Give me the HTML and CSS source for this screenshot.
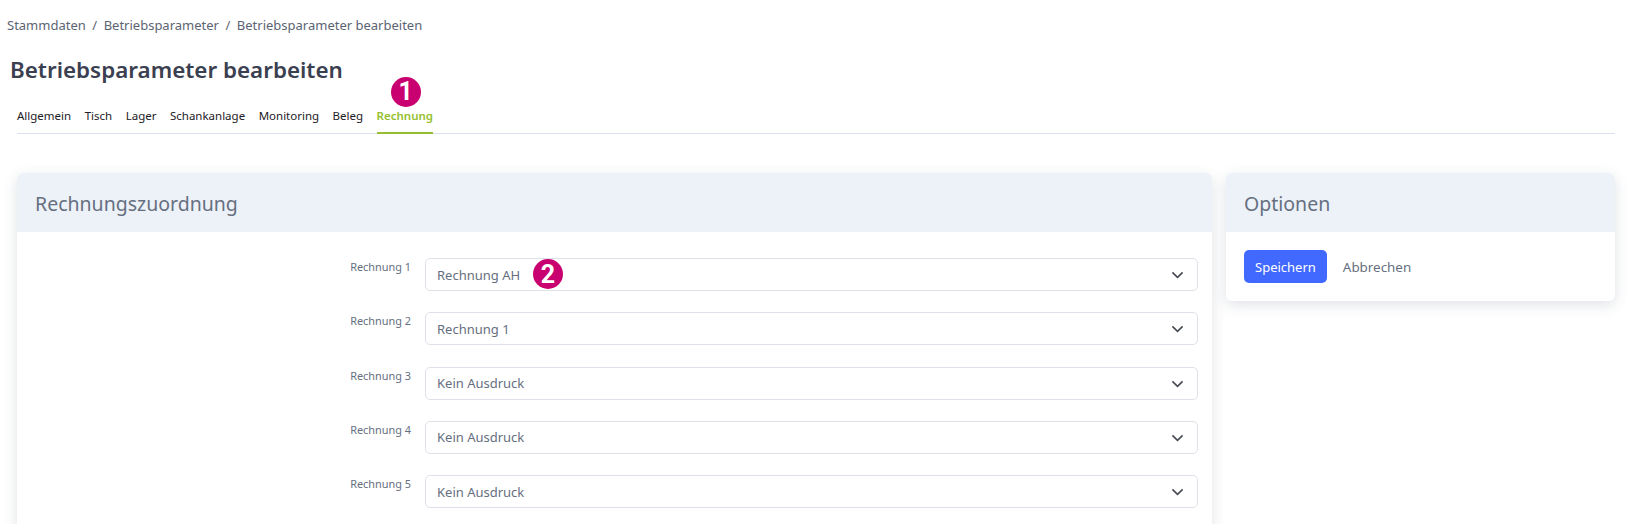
FILE: index.html

```html
<!DOCTYPE html>
<html lang="de">
<head>
  <meta charset="UTF-8">
  <title>Betriebsparameter bearbeiten</title>
  <link rel="stylesheet" href="styles.css">
</head>
<body>
  <nav class="breadcrumb">
    <a>Stammdaten</a><span class="sep">/</span><a>Betriebsparameter</a><span class="sep">/</span><a>Betriebsparameter bearbeiten</a>
  </nav>

  <h1>Betriebsparameter bearbeiten</h1>

  <div class="tabs">
    <a class="tab">Allgemein</a>
    <a class="tab">Tisch</a>
    <a class="tab">Lager</a>
    <a class="tab">Schankanlage</a>
    <a class="tab">Monitoring</a>
    <a class="tab">Beleg</a>
    <a class="tab active">Rechnung<span class="marker marker-tab">1</span></a>
  </div>

  <div class="columns">
    <section class="card card-main">
      <div class="card-header">Rechnungszuordnung</div>
      <div class="card-body form">
        <div class="row">
          <label>Rechnung 1</label>
          <div class="select">
            <span>Rechnung AH</span><span class="marker marker-field">2</span>
            <svg class="chevron" viewBox="0 0 14 8"><path d="M1.5 1.2 7 6.6l5.5-5.4"/></svg>
          </div>
        </div>
        <div class="row">
          <label>Rechnung 2</label>
          <div class="select">
            <span>Rechnung 1</span>
            <svg class="chevron" viewBox="0 0 14 8"><path d="M1.5 1.2 7 6.6l5.5-5.4"/></svg>
          </div>
        </div>
        <div class="row">
          <label>Rechnung 3</label>
          <div class="select">
            <span>Kein Ausdruck</span>
            <svg class="chevron" viewBox="0 0 14 8"><path d="M1.5 1.2 7 6.6l5.5-5.4"/></svg>
          </div>
        </div>
        <div class="row">
          <label>Rechnung 4</label>
          <div class="select">
            <span>Kein Ausdruck</span>
            <svg class="chevron" viewBox="0 0 14 8"><path d="M1.5 1.2 7 6.6l5.5-5.4"/></svg>
          </div>
        </div>
        <div class="row">
          <label>Rechnung 5</label>
          <div class="select">
            <span>Kein Ausdruck</span>
            <svg class="chevron" viewBox="0 0 14 8"><path d="M1.5 1.2 7 6.6l5.5-5.4"/></svg>
          </div>
        </div>
      </div>
    </section>

    <section class="card card-side">
      <div class="card-header">Optionen</div>
      <div class="card-body actions">
        <button class="btn-primary">Speichern</button>
        <button class="btn-link">Abbrechen</button>
      </div>
    </section>
  </div>
</body>
</html>
```

FILE: styles.css

```css
* {
  box-sizing: border-box;
  font-family: "Noto Sans", "Open Sans", sans-serif;
}

html, body {
  height: 524px;
  overflow: hidden;
}

body {
  margin: 0;
  background: #fff;
  color: #666f80;
}

.breadcrumb {
  padding: 16px 0 0 7px;
  font-size: 13px;
  line-height: 18px;
  color: #5b6472;
}

.breadcrumb .sep {
  margin: 0 6.5px;
}

h1 {
  margin: 19px 0 0 10px;
  font-size: 22.4px;
  line-height: 33px;
  font-weight: 600;
  color: #3b4050;
}

.tabs {
  display: flex;
  gap: 13.5px;
  margin: 14px 17px 0 17px;
  border-bottom: 1px solid #d9dfee;
}

.tab {
  position: relative;
  padding: 7px 0 7px;
  font-size: 11.5px;
  line-height: 18px;
  color: #1d2026;
}

.tab.active {
  color: #95bf2f;
  font-weight: 600;
  border-bottom: 2px solid #95bf2f;
  margin-bottom: -1px;
}

.marker {
  position: absolute;
  display: flex;
  align-items: center;
  justify-content: center;
  width: 30px;
  height: 30px;
  border-radius: 50%;
  background: #c9006f;
  color: #fff;
  font-family: "Roboto", sans-serif;
  font-size: 25px;
  font-weight: 700;
}

.marker-tab {
  top: -23px;
  left: 14px;
}

.marker-field {
  top: 0;
  left: 107px;
}

.columns {
  display: flex;
  align-items: flex-start;
  gap: 14px;
  margin: 39px 17px 0 17px;
}

.card {
  background: #fff;
  border-radius: 6px;
  box-shadow: 0 4px 14px rgba(60, 75, 100, 0.16);
  overflow: hidden;
}

.card-main {
  flex: 1;
}

.card-side {
  width: 389px;
}

.card-header {
  height: 59px;
  padding: 1px 18px 0;
  display: flex;
  align-items: center;
  background: #edf2f9;
  font-size: 19.5px;
  color: #666f80;
}

.form {
  padding: 26px 14px 20px 0;
}

.row {
  display: flex;
  gap: 14px;
  margin-bottom: 21.3px;
}

.row label {
  width: 394px;
  text-align: right;
  font-size: 10.9px;
  line-height: 18px;
  color: #666f80;
}

.select {
  position: relative;
  flex: 1;
  display: flex;
  align-items: center;
  height: 33px;
  padding: 0 11px;
  border: 1px solid #dfe1e9;
  border-radius: 5px;
  font-size: 13px;
  color: #666f80;
}

.chevron {
  position: absolute;
  right: 13px;
  top: 12px;
  width: 13px;
  height: 8px;
  fill: none;
  stroke: #454a52;
  stroke-width: 1.7;
}

.actions {
  display: flex;
  align-items: center;
  gap: 16px;
  padding: 18px;
}

.btn-primary {
  height: 33px;
  padding: 0 11px;
  border: none;
  border-radius: 5px;
  background: #4169ff;
  color: #fff;
  font-size: 13px;
}

.btn-link {
  padding: 0;
  border: none;
  background: none;
  color: #666f80;
  font-size: 13.4px;
}
```
